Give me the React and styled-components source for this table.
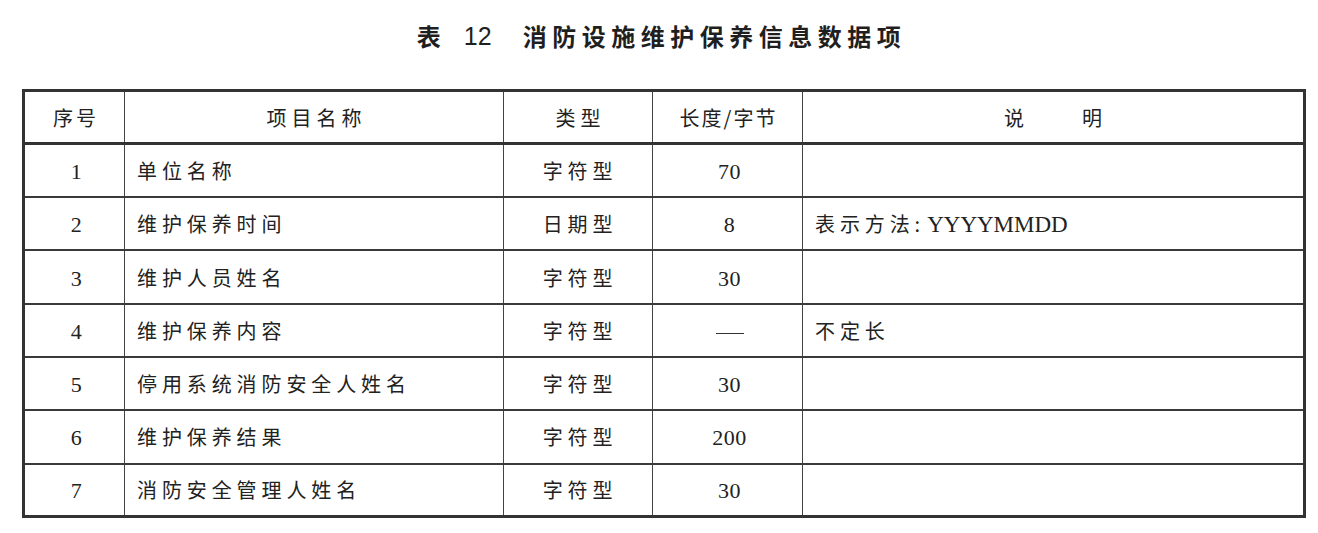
import React from "react";
import styled, { createGlobalStyle } from "styled-components";

const Global = createGlobalStyle`
  html, body { margin: 0; padding: 0; background: #ffffff; }
  body { font-family: "Noto Sans CJK SC", "Liberation Serif", serif; color: #222; }
`;

const Page = styled.div`
  width: 1318px;
  height: 533px;
  overflow: hidden;
  background: #fff;
`;

const Title = styled.h1`
  margin: 0;
  padding-top: 22px;
  height: 89px;
  box-sizing: border-box;
  display: flex;
  justify-content: center;
  align-items: flex-start;
  gap: 31px;
  font-family: "Noto Sans CJK SC", sans-serif;
  font-weight: 700;
  font-size: 24px;
  line-height: 28px;
  color: #1f1f1f;
`;

const TitleNo = styled.span`
  display: flex;
  gap: 23px;
  & > b {
    font-family: "Liberation Sans", "Noto Sans CJK SC", sans-serif;
    font-weight: 400;
    font-size: 25px;
  }
`;

const TitleName = styled.span`
  letter-spacing: 5.5px;
  margin-right: -5px;
`;

const Table = styled.table`
  margin-left: 22px;
  width: 1281px;
  border-collapse: collapse;
  table-layout: fixed;
  border: 3px solid #333;
`;

const Row = styled.tr`
  height: 53.3px;
`;

const Head = styled.th`
  font-weight: 400;
  font-size: 20px;
  letter-spacing: ${(p) => p.$ls}px;
  text-align: center;
  padding: 0 0 0 ${(p) => p.$ls}px;
  border-left: 1.5px solid #444;
  border-bottom: 3px solid #333;
  color: #222;
`;

const Cell = styled.td`
  font-size: 20px;
  letter-spacing: 4.9px;
  padding: 0 0 0 ${(p) => (p.$align === "left" ? 12 : 4)}px;
  text-align: ${(p) => p.$align || "center"};
  border-left: 1.5px solid #444;
  border-top: 2px solid #3a3a3a;
  color: #222;
  white-space: nowrap;
`;

const Num = styled.span`
  font-family: "Liberation Serif", serif;
  font-size: 22px;
  letter-spacing: 0.5px;
`;

const Latin = styled.span`
  font-family: "Liberation Serif", serif;
  font-size: 23px;
  letter-spacing: 0;
`;

const Colon = styled.span`
  letter-spacing: 0;
  margin-right: 7px;
`;

const Dash = styled.span`
  display: inline-block;
  width: 28px;
  height: 1px;
  background: #333;
  vertical-align: middle;
`;

const Gap = styled.span`
  display: inline-block;
  width: 58px;
`;

const rows = [
  ["1", "单位名称", "字符型", "70", null],
  ["2", "维护保养时间", "日期型", "8", "date"],
  ["3", "维护人员姓名", "字符型", "30", null],
  ["4", "维护保养内容", "字符型", "—", "不定长"],
  ["5", "停用系统消防安全人姓名", "字符型", "30", null],
  ["6", "维护保养结果", "字符型", "200", null],
  ["7", "消防安全管理人姓名", "字符型", "30", null],
];

export default function App() {
  return (
    <Page>
      <Global />
      <Title>
        <TitleNo>
          <span>表</span>
          <b>12</b>
        </TitleNo>
        <TitleName>消防设施维护保养信息数据项</TitleName>
      </Title>
      <Table>
        <colgroup>
          <col style={{ width: 101 }} />
          <col style={{ width: 379 }} />
          <col style={{ width: 149 }} />
          <col style={{ width: 150 }} />
          <col style={{ width: 502 }} />
        </colgroup>
        <thead>
          <Row>
            <Head $ls={3}>序号</Head>
            <Head $ls={5}>项目名称</Head>
            <Head $ls={5}>类型</Head>
            <Head $ls={2}>长度/字节</Head>
            <Head $ls={0}>
              说<Gap />明
            </Head>
          </Row>
        </thead>
        <tbody>
          {rows.map(([n, name, type, len, note]) => (
            <Row key={n}>
              <Cell>
                <Num>{n}</Num>
              </Cell>
              <Cell $align="left">{name}</Cell>
              <Cell>{type}</Cell>
              <Cell>{len === "—" ? <Dash /> : <Num>{len}</Num>}</Cell>
              <Cell $align="left">
                {note === "date" ? (
                  <>
                    表示方法<Colon>:</Colon>
                    <Latin>YYYYMMDD</Latin>
                  </>
                ) : (
                  note
                )}
              </Cell>
            </Row>
          ))}
        </tbody>
      </Table>
    </Page>
  );
}
